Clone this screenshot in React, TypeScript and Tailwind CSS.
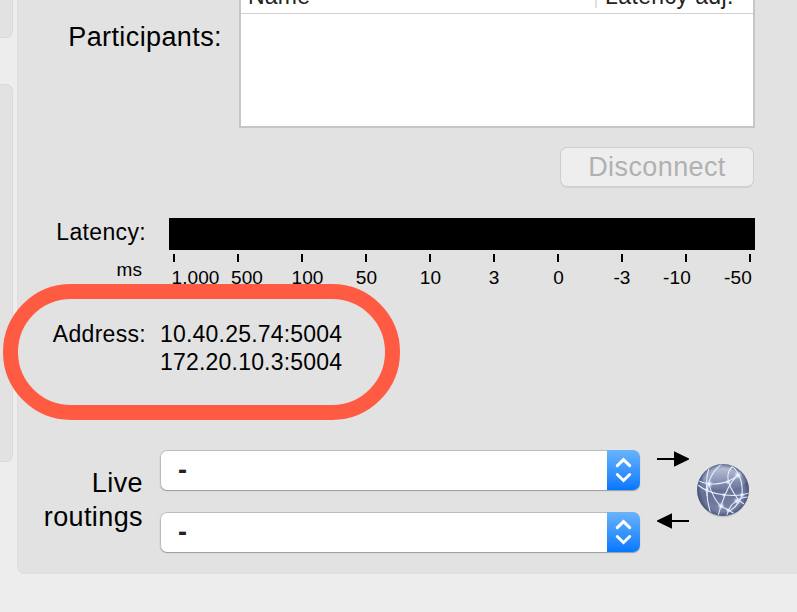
const ticks = [0, 1, 2, 3, 4, 5, 6, 7, 8, 9];
const scale = ["1.000", "500", "100", "50", "10", "3", "0", "-3", "-10", "-50"];

function RoutingSelect() {
  return (
    <button className="flex h-10 w-[480px] items-stretch overflow-hidden rounded-[7px] text-left shadow-[0_1px_1px_#999]">
      <span className="flex-1 rounded-l-[7px] border-l border-t border-[#bcbcbc] bg-white pl-[17px] pt-[3px] text-[27px] leading-[32px] text-[#222]"><span className="inline-block font-bold">-</span></span>
      <span className="flex w-[33px] items-center justify-center bg-gradient-to-b from-[#69b3fc] via-[#3996fd] to-[#0078ff]">
        <svg width="18" height="26" viewBox="0 0 18 26" fill="none" stroke="white" strokeWidth="3" strokeLinecap="round" strokeLinejoin="miter">
          <path d="M2.300 8.700 8.500 2.700l6.200 6M2.300 17.500l6.200 6 6.200-6" />
        </svg>
      </span>
    </button>
  );
}

function Arrow({ left = false }: { left?: boolean }) {
  return (
    <svg className={left ? "rotate-180" : ""} width="32" height="16" viewBox="0 0 32 16">
      <path d="M0 8h20" stroke="black" strokeWidth="2" />
      <path d="M17 .2 32 7.600v.8L17 15.800Z" />
    </svg>
  );
}

function Globe() {
  return (
    <svg width="56" height="58" viewBox="-28 -28 56 58">
      <defs>
        <linearGradient id="ball" x1="0" y1="0" x2=".3" y2="1">
          <stop offset="0" stopColor="#8794b8" />
          <stop offset=".35" stopColor="#7682a7" />
          <stop offset=".6" stopColor="#667092" />
          <stop offset="1" stopColor="#7a86a8" />
        </linearGradient>
        <linearGradient id="sheen" x1="0" y1="0" x2="0" y2="1">
          <stop offset="0" stopColor="#d3daec" stopOpacity=".85" />
          <stop offset="1" stopColor="#a5afcc" stopOpacity=".1" />
        </linearGradient>
        <radialGradient id="edge">
          <stop offset=".82" stopColor="#303a60" stopOpacity="0" />
          <stop offset="1" stopColor="#303a60" stopOpacity=".6" />
        </radialGradient>
        <radialGradient id="glow">
          <stop offset="0" stopColor="#fff" />
          <stop offset=".3" stopColor="#e8f2ff" stopOpacity=".8" />
          <stop offset="1" stopColor="#b8ceff" stopOpacity="0" />
        </radialGradient>
        <clipPath id="disc"><circle r="25.800" /></clipPath>
      </defs>
      <ellipse cy="2" rx="25" ry="25.500" fill="#999" opacity=".35" />
      <circle r="26" fill="url(#ball)" />
      <g clipPath="url(#disc)">
        <ellipse cx="2" cy="-13" rx="23" ry="13" fill="url(#sheen)" />
        <circle r="26" fill="url(#edge)" />
        <g fill="none" stroke="#e9effc" strokeWidth="1.050">
          <path d="M-26-10C-16-4 3-4 15-15" />
          <path d="M-14-22C-18-10-17 10-12 24" />
          <path d="M0-27C-10-20-16-8-16 6" />
          <path d="M-25-5C-18 1-8 4 2 5S18 6 26 3" />
          <path d="M10-24C3-18 4-10 8-2S17 12 21 14" />
          <path d="M15-15C7-8 2 3-2 16L-5 26" />
          <path d="M7-26C18-17 20-5 19 5" />
          <path d="M-14-6C-12 4-5 14-2 16S9 22 12 24" />
          <path d="M26 7C17 7 7 12 4 25" />
          <path d="M19 5C17 12 12 18 5 22" />
        </g>
        <g fill="url(#glow)">
          <circle cx="-14" cy="-6" r="4.500" /><circle cx="15" cy="-15" r="4.500" />
          <circle cx="5" cy="-8" r="3" /><circle cx="-16" cy="0" r="3" />
          <circle cx="14" cy="11" r="4" /><circle cx="-2" cy="16" r="4" />
          <circle cx="19" cy="5" r="3" /><circle cx="1" cy="5" r="2.500" />
          <circle cx="5" cy="20" r="2.500" />
        </g>
      </g>
      <circle r="25.500" fill="none" stroke="#4b5678" strokeWidth=".8" opacity=".5" />
    </svg>
  );
}

export default function App() {
  return (
    <div className="relative flex h-[612px] w-[797px] overflow-hidden bg-[#ededed] font-['Liberation_Sans',Arial,sans-serif] text-black">
      <aside className="mr-1 w-[13px] shrink-0">
        <div className="h-[38px] rounded-br-[7px] border-b border-r border-[#dadada] bg-[#e2e2e2]" />
        <div className="mt-[46px] h-[378px] rounded-r-[7px] border-y border-r border-[#d9d9d9] bg-[#e2e2e2]" />
      </aside>
      <main className="h-[574px] w-[780px] shrink-0 rounded-bl-[7px] border-b border-l border-[#dfdfdf] bg-[#e2e2e2]">
        <section className="flex h-32">
          <h2 className="w-[204px] pt-[22px] text-right text-[27px] leading-[30px] tracking-[0.4px]">Participants:</h2>
          <div className="ml-[17px] h-32 w-[516px] overflow-hidden border-2 border-t-0 border-[#c6c6c6] bg-white">
            <div className="flex h-[14px] border-b border-[#d2d2d2] text-[23px] text-[#222]">
              <span className="-mt-[17px] h-[26px] w-[354px] pl-[7px] leading-[26px] tracking-[0.2px]">Name</span>
              <span className="h-2 w-[2px] bg-[#e0e0e0]" />
              <span className="-mt-[17px] h-[26px] whitespace-nowrap pl-[8px] leading-[26px] tracking-[0.4px]">Latency adj.</span>
            </div>
          </div>
        </section>
        <div className="flex h-[90px] pl-[543px] pt-5">
          <button className="h-[38px] w-[192px] rounded-[6px] bg-[#eeeeee] text-[27px] leading-[38px] tracking-[0.4px] text-[#b1b1b1] shadow-[0_0_0_1px_#cdcdcd,0_2px_1px_#d2d2d2]">Disconnect</button>
        </div>
        <section className="flex h-[72px]">
          <div className="w-[128px] text-right">
            <div className="h-[39px] pt-[1px] text-[23px] leading-[26px] tracking-[0.35px]">Latency:</div>
            <div className="pr-[4px] text-[19px] leading-[26px] tracking-[0.1px]">ms</div>
          </div>
          <div className="ml-[23px] w-[597px]">
            <div className="h-8 w-[586px] bg-black" />
            <div className="ml-1 mt-1 flex gap-[62px]">
              {ticks.map((t) => <span key={t} className="h-2 w-[2px] shrink-0 bg-black" />)}
            </div>
            <div className="mt-[5px] grid grid-cols-[53px_50px_71px_47px_81px_46px_83px_44px_66px_56px] text-center text-[19px] leading-[22px] tracking-[0.1px]">
              {scale.map((s) => <span key={s}>{s}</span>)}
            </div>
          </div>
        </section>
        <section className="flex h-[160px] pt-[30px] text-[23px] leading-7 tracking-[0.2px]">
          <h2 className="w-[128px] text-right tracking-[0.3px]">Address:</h2>
          <p className="ml-[14px]">10.40.25.74:5004<br />172.20.10.3:5004</p>
        </section>
        <section className="flex h-[102px]">
          <h2 className="w-[125px] pt-4 text-right text-[27px] leading-[34px] tracking-[0.4px]">Live<br />routings</h2>
          <div className="ml-[17px] flex flex-col gap-[22px]"><RoutingSelect /><RoutingSelect /></div>
          <div className="ml-[17px] flex flex-col gap-[46px] pt-px"><Arrow /><Arrow left /></div>
          <div className="ml-[6px] pt-3"><Globe /></div>
        </section>
      </main>
      <div className="absolute left-[3px] top-[284px] h-[136px] w-[397px] rounded-[68px] border-[15px] border-[#ff5b42]" />
    </div>
  );
}
